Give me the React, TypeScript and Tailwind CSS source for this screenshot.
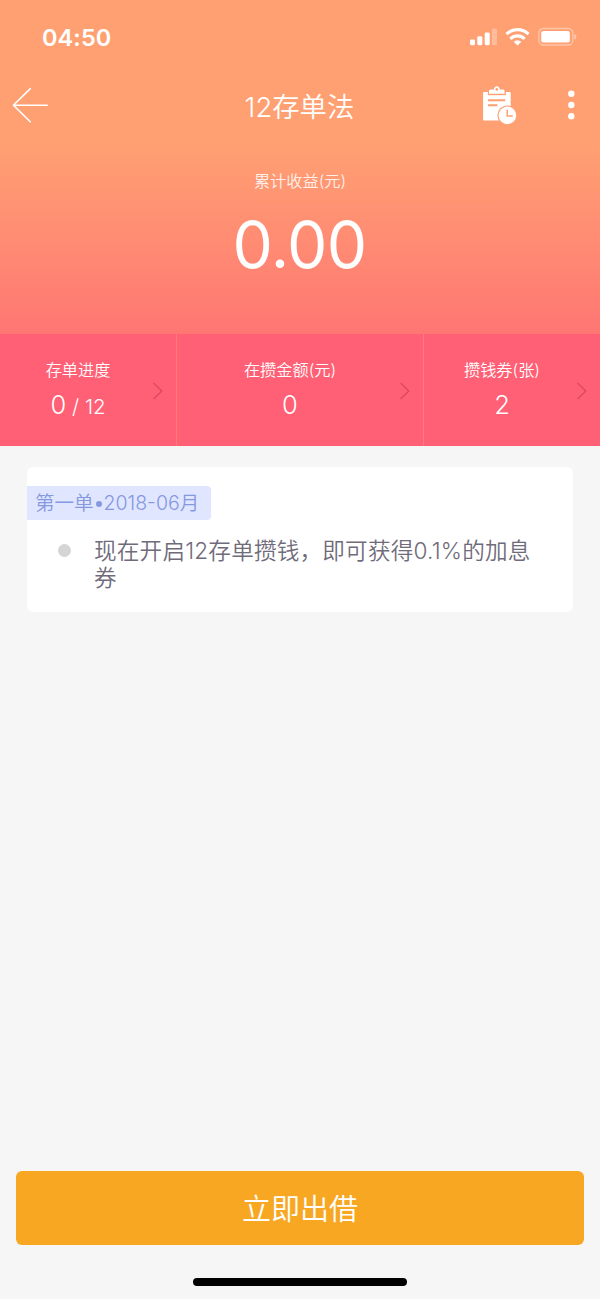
import React from "react";

interface Stat {
  label: string;
  value: string;
  total?: string;
  className: string;
}

const stats: Stat[] = [
  { label: "存单进度", value: "0", total: " / 12", className: "w-[177px] border-r" },
  { label: "在攒金额(元)", value: "0", className: "w-[247px] border-r" },
  { label: "攒钱券(张)", value: "2", className: "flex-1" },
];

const StatusBar = () => (
  <div className="flex h-[74px] items-center justify-between pl-[42px] pr-[22px]">
    <span className="pt-px text-[23.5px] font-semibold leading-8 tracking-[0.1px]">04:50</span>
    <div className="flex items-center">
      {/* Signal */}
      <svg width="28" height="20" viewBox="0 0 28 20" fill="currentColor">
        <rect x="0" y="12.4" width="5" height="5.8" rx="1.4" />
        <rect x="7.3" y="9.2" width="5" height="9" rx="1.4" />
        <rect x="14.7" y="5.4" width="5" height="12.8" rx="1.4" />
        <rect x="22" y="1.4" width="5" height="16.8" rx="1.4" opacity="0.3" />
      </svg>
      {/* Wifi */}
      <svg className="ml-[7px]" width="25" height="20" viewBox="0 0 25 20" fill="none" stroke="currentColor" strokeWidth="3.2">
        <path d="M1.5 7.1a15.6 15.6 0 0 1 22 0" />
        <path d="M5.4 11.8a10 10 0 0 1 14.2 0" />
        <path d="M12.5 18.5 8.7 14.8a5.4 5.4 0 0 1 7.6 0Z" fill="currentColor" stroke="none" />
      </svg>
      {/* Battery */}
      <svg className="ml-[8px]" width="40" height="20" viewBox="0 0 40 20" fill="none">
        <rect x="0.8" y="1.5" width="34" height="16.5" rx="4.5" stroke="currentColor" strokeWidth="1.3" opacity="0.4" />
        <rect x="3.2" y="4" width="28.6" height="11.6" rx="2" fill="currentColor" />
        <path d="M36.4 7c2.6.8 2.6 4.8 0 5.6Z" fill="currentColor" opacity="0.45" />
      </svg>
    </div>
  </div>
);

const NavBar = () => (
  <div className="flex h-[62px] items-center pl-[12px] pr-[25px]">
    <button className="flex w-[106px] items-center">
      <svg width="37" height="36" viewBox="0 0 37 36" fill="none" stroke="currentColor" strokeWidth="1.6" strokeLinecap="round" strokeLinejoin="round">
        <path d="M18.3 1.6 1.4 18.2l16.9 16.6M1.4 18.2h33.8" />
      </svg>
    </button>
    <h1 className="flex-1 pt-[4px] text-center text-[27.4px] font-[350] leading-9">12存单法</h1>
    <div className="flex w-[94px] items-center justify-between">
      {/* Clipboard with clock */}
      <svg width="36" height="40" viewBox="0 0 36 40">
        <rect x="2.1" y="6.9" width="27.6" height="28.6" rx="1" fill="currentColor" />
        <path d="M6.9 5.5h18v4.7h-18Z" fill="#ffa072" />
        <path
          fillRule="evenodd"
          d="M8 8.7V6.2c0-1.1.7-1.7 1.8-1.7h3.1c0-1.9 1.2-3.3 2.9-3.3s2.9 1.4 2.9 3.3h3.1c1.1 0 1.8.6 1.8 1.7v2.5ZM15.8 3.1a1.3 1.3 0 1 0 0 2.6a1.3 1.3 0 0 0 0-2.6Z"
          fill="currentColor"
        />
        <path d="M7 15.2h17.2M7 20.2h9.4" stroke="#ffa072" strokeWidth="1.9" />
        <circle cx="26.4" cy="30.4" r="10" fill="#ffa072" />
        <circle cx="26.4" cy="30.4" r="8.8" fill="currentColor" />
        <path d="M26.2 24.8v6.2h5.5" fill="none" stroke="#ffa072" strokeWidth="1.5" />
      </svg>
      <svg width="7" height="30" viewBox="0 0 7 30" fill="currentColor">
        <circle cx="3.3" cy="3.7" r="3.2" />
        <circle cx="3.3" cy="15" r="3.2" />
        <circle cx="3.3" cy="26.3" r="3.2" />
      </svg>
    </div>
  </div>
);

const StatCell = ({ label, value, total, className }: Stat) => (
  <div className={`flex items-center border-[#ff7a78] ${className}`}>
    <div className="flex-1 pl-1 text-center font-[350]">
      <div className="text-[16.2px] leading-6">{label}</div>
      <div className="mt-[7px] h-[33px] text-[25.5px] leading-8">
        {value}
        {total && <span className="whitespace-pre text-[20.5px] leading-none">{total}</span>}
      </div>
    </div>
    <svg className="mt-[2px]" width="24" height="18" viewBox="0 0 24 18" fill="none" stroke="#dc4863" strokeWidth="1.4">
      <path d="M1.6 1l8.2 8-8.2 8" />
    </svg>
  </div>
);

export default function App() {
  return (
    <div className="flex h-[1299px] w-[600px] flex-col bg-[#f6f6f6] font-[Inter,'Noto_Sans_CJK_SC',sans-serif]">
      <header className="h-[334px] bg-linear-to-b from-[#ffa072] from-43% to-[#ff7673] text-white">
        <StatusBar />
        <NavBar />
        <div className="pt-[33px] text-center font-[350]">
          <p className="text-[16.2px] leading-6 opacity-85">累计收益(元)</p>
          <p className="mt-[16px] pr-px text-[64px] font-normal leading-[72px] tracking-[-0.6px]">0.00</p>
        </div>
      </header>

      <section className="flex h-[112px] bg-[#ff6075] text-white">
        {stats.map((stat) => (
          <StatCell key={stat.label} {...stat} />
        ))}
      </section>

      <main className="flex-1 px-[27px] pt-[21px]">
        <div className="h-[145px] rounded-md bg-white pt-[19px]">
          <div className="flex h-[34px] w-[184px] items-center rounded-r bg-[#e0e6ff] pl-[8px] pt-[2px] text-[19.5px] font-[350] text-[#8598e0]">
            第一单
            <span className="mx-[2px] h-[6px] w-[6px] rounded-full bg-[#8598e0]" />
            2018-06月
          </div>
          <div className="flex pl-[31px] pt-[18px]">
            <span className="mt-[6px] h-[13px] w-[13px] shrink-0 rounded-full bg-[#d5d5d5]" />
            <p className="ml-[23px] w-[445px] text-[22.6px] font-[350] leading-[26.5px] tracking-[0.2px] text-[#6f6b7a]">
              现在开启12存单攒钱，即可获得0.1%的加息券
            </p>
          </div>
        </div>
      </main>

      <footer className="px-4 pb-[13px]">
        <button className="h-[74px] w-full rounded-md bg-[#f8a723] pt-[3px] text-[29px] font-[350] text-white">立即出借</button>
        <div className="mx-auto mt-[33px] h-[8px] w-[214px] rounded-full bg-black" />
      </footer>
    </div>
  );
}
